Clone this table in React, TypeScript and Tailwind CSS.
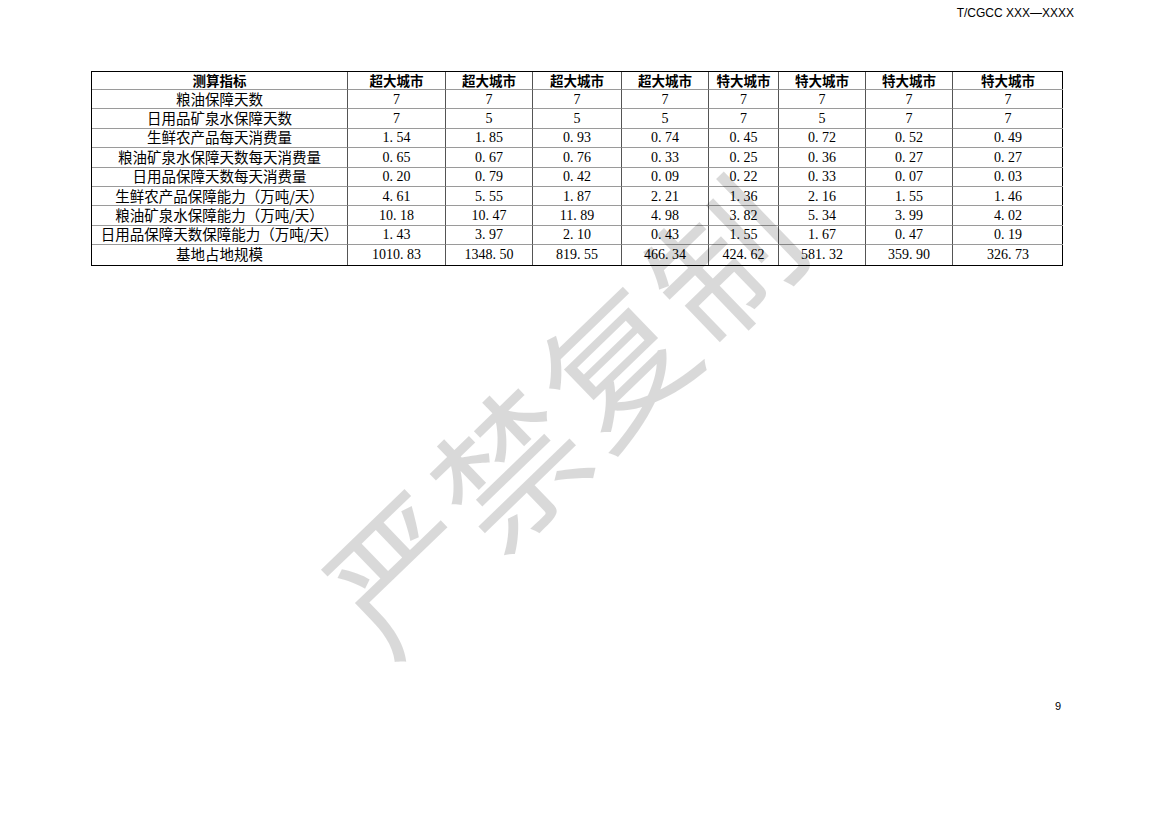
const HEAD = ['超大城市', '超大城市', '超大城市', '超大城市', '特大城市', '特大城市', '特大城市', '特大城市']

const COL_CLASS = [
  'w-[256px]',
  'w-[98px]',
  'w-[87px]',
  'w-[89px]',
  'w-[87px]',
  'w-[70px]',
  'w-[87px]',
  'w-[87px]',
  'w-[110px]',
]

const ROWS: string[][] = [
  ['粮油保障天数', '7', '7', '7', '7', '7', '7', '7', '7'],
  ['日用品矿泉水保障天数', '7', '5', '5', '5', '7', '5', '7', '7'],
  ['生鲜农产品每天消费量', '1.54', '1.85', '0.93', '0.74', '0.45', '0.72', '0.52', '0.49'],
  ['粮油矿泉水保障天数每天消费量', '0.65', '0.67', '0.76', '0.33', '0.25', '0.36', '0.27', '0.27'],
  ['日用品保障天数每天消费量', '0.20', '0.79', '0.42', '0.09', '0.22', '0.33', '0.07', '0.03'],
  ['生鲜农产品保障能力（万吨/天）', '4.61', '5.55', '1.87', '2.21', '1.36', '2.16', '1.55', '1.46'],
  ['粮油矿泉水保障能力（万吨/天）', '10.18', '10.47', '11.89', '4.98', '3.82', '5.34', '3.99', '4.02'],
  ['日用品保障天数保障能力（万吨/天）', '1.43', '3.97', '2.10', '0.43', '1.55', '1.67', '0.47', '0.19'],
  ['基地占地规模', '1010.83', '1348.50', '819.55', '466.34', '424.62', '581.32', '359.90', '326.73'],
]

// SimSun-style numbers: the dot keeps a half-width cell of its own
function Num({ value }: { value: string }) {
  const [int, frac] = value.split('.')
  return (
    <span className="font-['Liberation_Serif','Noto_Sans_CJK_SC',serif] text-[14px] leading-none whitespace-nowrap">
      {int}
      {frac !== undefined && (
        <>
          <span className="inline-block w-[7px] text-left">.</span>
          {frac}
        </>
      )}
    </span>
  )
}

export default function App() {
  return (
    <div className="relative w-[1169px] h-[827px] bg-white overflow-hidden flex flex-col text-black">
      <div className="flex justify-end pt-[6px] pr-[95px] font-['Liberation_Sans',Arial,sans-serif] text-[12px] leading-[14px]">
        T/CGCC XXX—XXXX
      </div>

      <div className="mt-[51px] ml-[91px] w-[972px] border border-black">
        <table className="w-full table-fixed border-separate border-spacing-0 text-[14px] leading-none">
          <colgroup>
            {COL_CLASS.map((cls, i) => (
              <col key={i} className={cls} />
            ))}
          </colgroup>
          <thead>
            <tr>
              {['测算指标', ...HEAD].map((h, i) => (
                <th
                  key={i}
                  className={`h-[18px] p-0 text-center align-middle font-['Noto_Sans_CJK_SC',sans-serif] text-[13.5px] leading-none font-bold border-b border-b-[#9a9a9a] ${
                    i < HEAD.length ? 'border-r border-r-[#555]' : ''
                  }`}
                >
                  {h}
                </th>
              ))}
            </tr>
          </thead>
          <tbody>
            {ROWS.map((row, r) => (
              <tr key={r}>
                {row.map((cell, c) => (
                  <td
                    key={c}
                    className={`h-[19.4px] p-0 text-center align-middle text-[14px] leading-none ${
                      r < ROWS.length - 1 ? 'border-b border-b-[#9a9a9a]' : ''
                    } ${c < row.length - 1 ? 'border-r border-r-[#555]' : ''}`}
                  >
                    {c === 0 ? (
                      <span className="font-['Noto_Sans_CJK_SC',sans-serif] text-[14.5px] leading-none whitespace-nowrap">
                        {cell}
                      </span>
                    ) : (
                      <Num value={cell} />
                    )}
                  </td>
                ))}
              </tr>
            ))}
          </tbody>
        </table>
      </div>

      <div className="mt-[434px] flex justify-end pr-[108px] font-['Liberation_Sans',Arial,sans-serif] text-[11px] leading-[12px]">
        9
      </div>

      {/* watermark */}
      <div
        aria-hidden
        className="pointer-events-none absolute left-[560px] top-[410px] -translate-x-1/2 -translate-y-1/2 -rotate-[44deg] whitespace-nowrap font-['Noto_Sans_CJK_SC',sans-serif] text-[145px] leading-none font-normal tracking-[4px] text-black/[0.15]"
      >
        严禁复制
      </div>
    </div>
  )
}
